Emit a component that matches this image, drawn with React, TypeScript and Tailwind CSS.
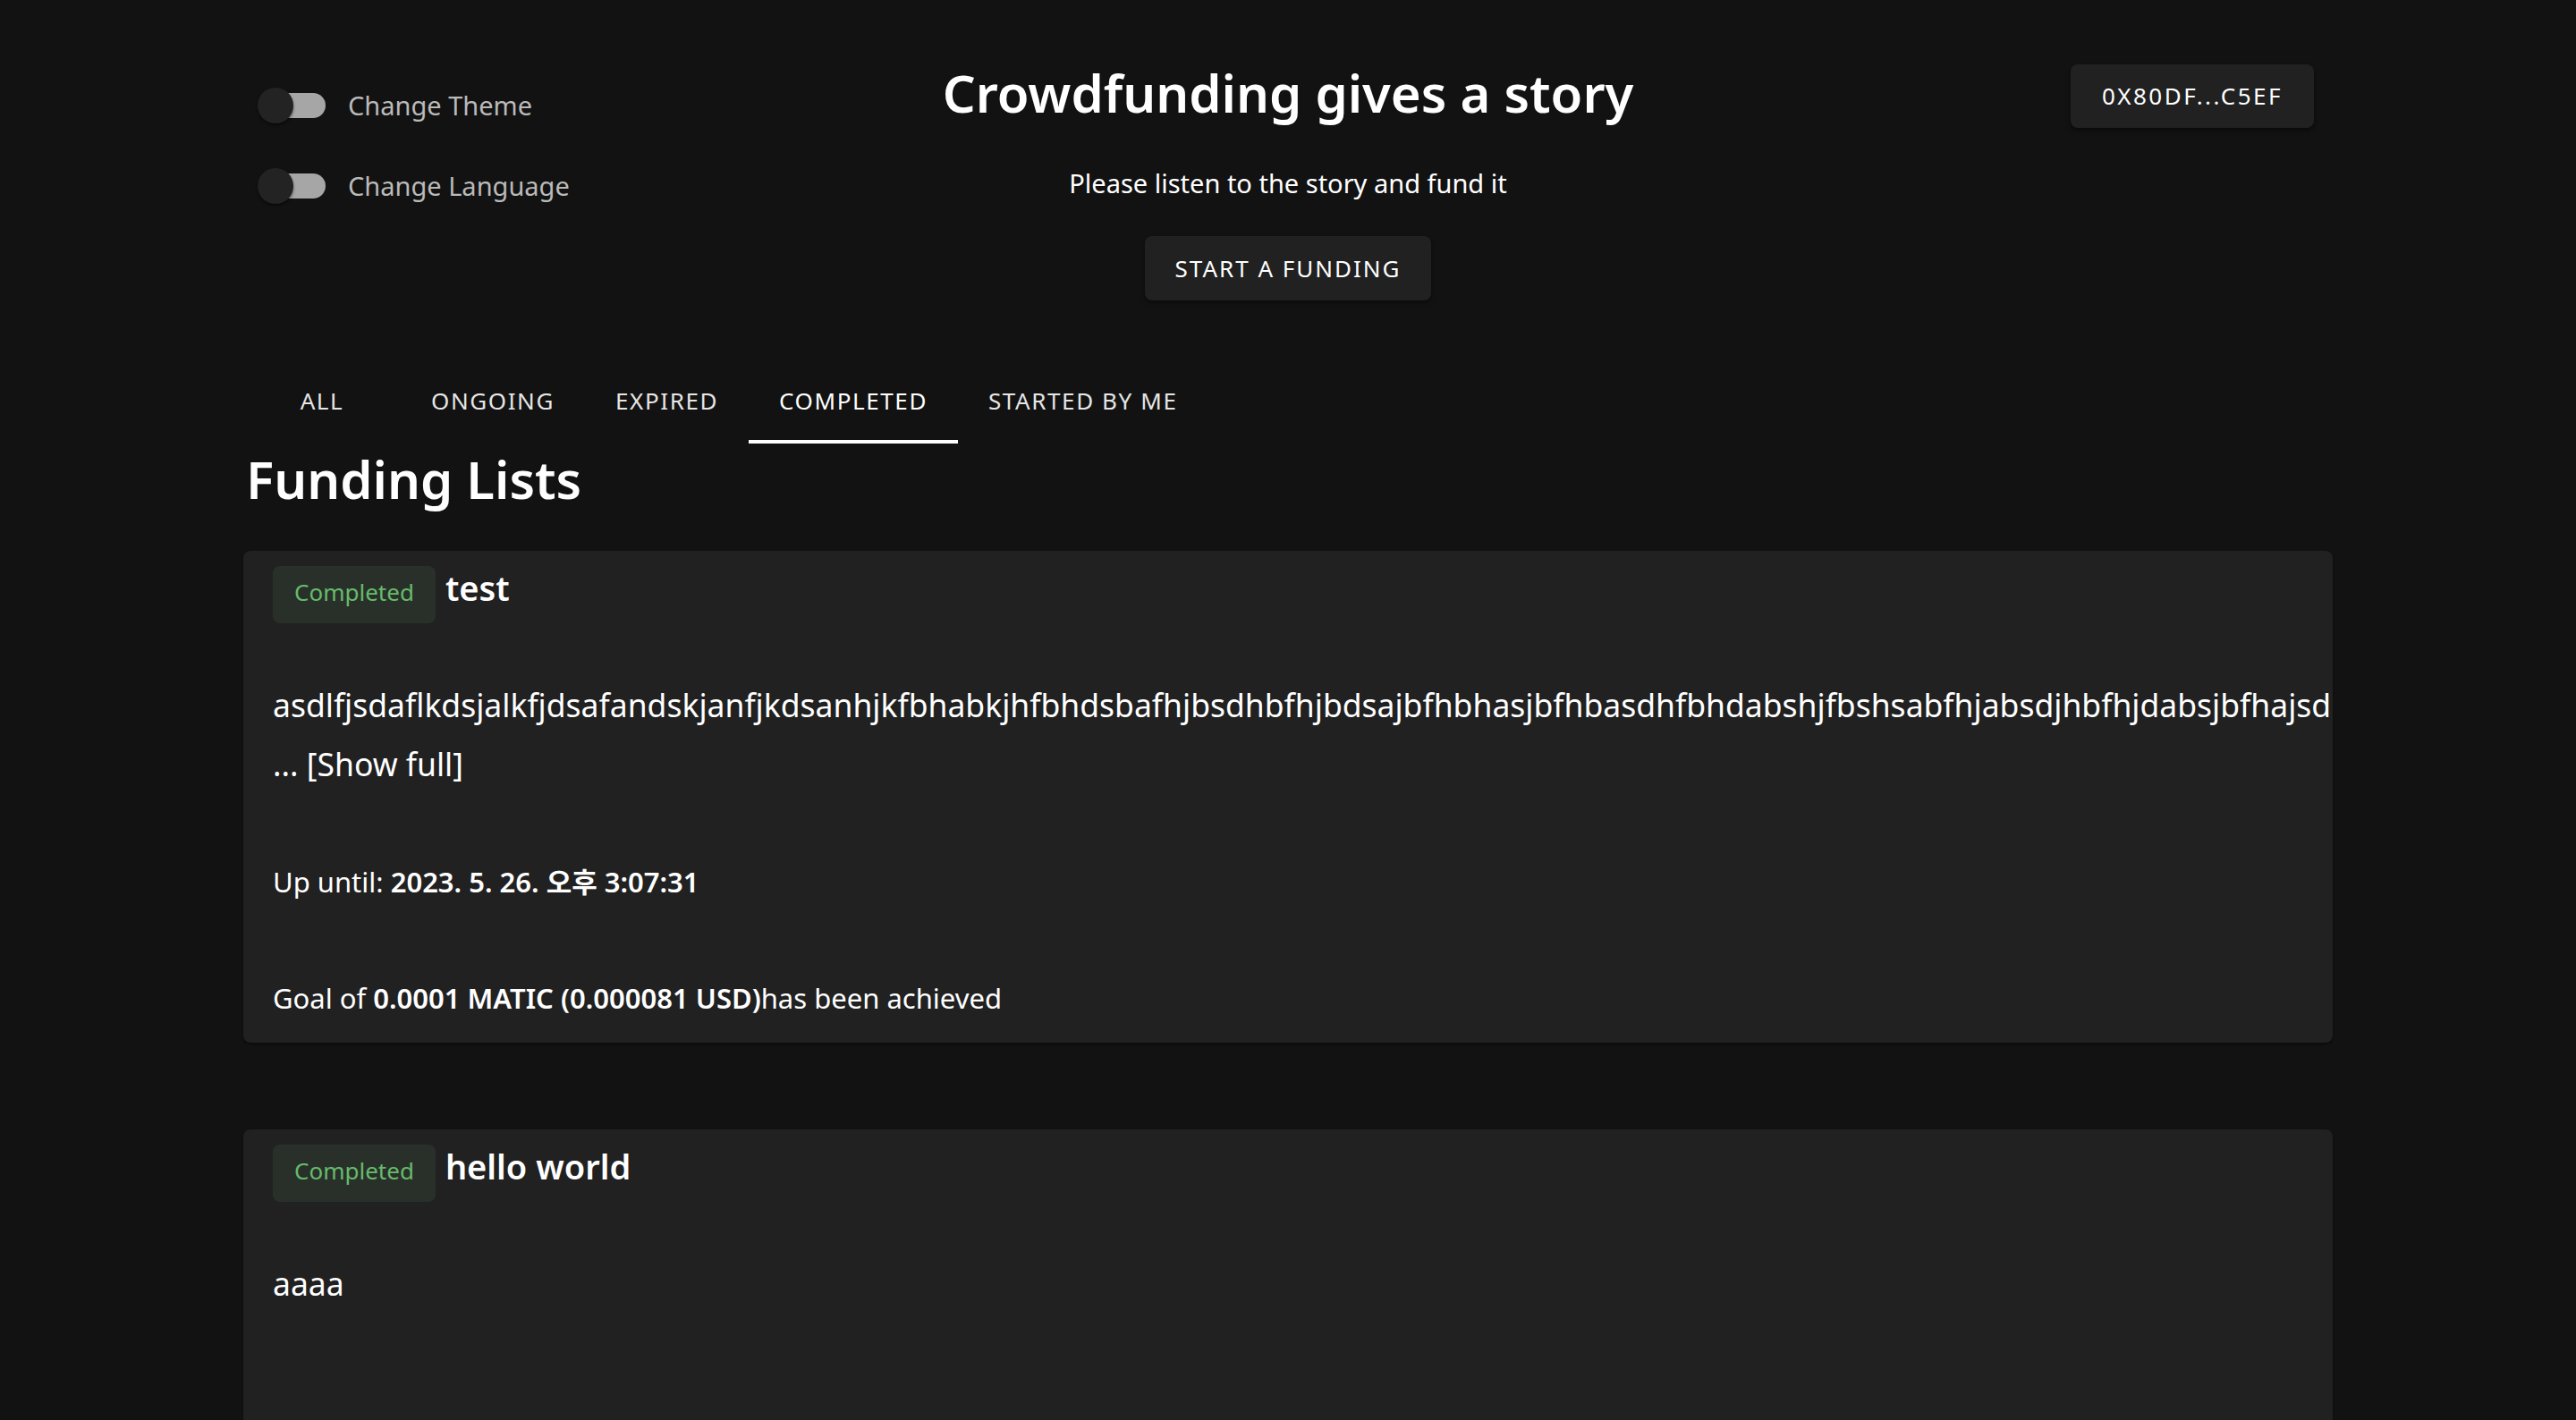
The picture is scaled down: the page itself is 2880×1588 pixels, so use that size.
import { useState } from "react";

const font = "font-['Noto_Sans','Noto_Sans_CJK_KR',sans-serif]";

const tabs = ["ALL", "ONGOING", "EXPIRED", "COMPLETED", "STARTED BY ME"];

const longText =
  "asdlfjsdaflkdsjalkfjdsafandskjanfjkdsanhjkfbhabkjhfbhdsbafhjbsdhbfhjbdsajbfhbhasjbfhbasdhfbhdabshjfbshsabfhjabsdjhbfhjdabsjbfhajsdlkfjhsadkjfhsdkjfhaskjdfh";

type Funding = {
  title: string;
  desc: string;
  truncated: boolean;
  until?: string;
  goal?: string;
};

const fundings: Funding[] = [
  {
    title: "test",
    desc: longText,
    truncated: true,
    until: "2023. 5. 26. 오후 3:07:31",
    goal: "0.0001 MATIC (0.000081 USD)",
  },
  {
    title: "hello world",
    desc: "aaaa",
    truncated: false,
  },
];

const Toggle = ({ label }: { label: string }) => (
  <div className="flex h-[76px] items-center">
    <div className="relative ml-[24px] h-[28px] w-[68px] rounded-full bg-[#a6a6a6]">
      <div className="absolute left-[-8px] top-[-6px] h-[40px] w-[40px] rounded-full bg-[#232323] shadow-[0_2px_3px_rgba(0,0,0,0.5)]" />
    </div>
    <span className="ml-[25px] text-[29px] leading-[40px] text-[#bababa]">{label}</span>
  </div>
);

const FundingCard = ({ item }: { item: Funding }) => (
  <div className="min-h-[400px] overflow-hidden rounded-[8px] bg-[#212121] px-[33px] pb-[30px] pt-[17px] shadow-[0_2px_3px_rgba(0,0,0,0.4)]">
    <div className="flex items-baseline gap-[11px]">
      <span className="rounded-[8px] bg-[#29302a] px-[24px] pb-[17px] pt-[11px] text-[26px] leading-[36px] text-[#66bb6a]">
        Completed
      </span>
      <span className="text-[38px] font-semibold leading-[46px]">{item.title}</span>
    </div>
    <p className="mt-[58px] text-[35.5px] leading-[66px]">
      {item.desc}
      {item.truncated && " ... [Show full]"}
    </p>
    {item.until && (
      <p className="mt-[79px] text-[31px] leading-[40px]">
        Up until: <span className="font-semibold">{item.until}</span>
      </p>
    )}
    {item.goal && (
      <p className="mt-[90px] text-[31px] leading-[40px]">
        Goal of <span className="font-semibold">{item.goal}</span>has been achieved
      </p>
    )}
  </div>
);

export default function App() {
  const [tab] = useState(3);

  return (
    <div className={`h-screen overflow-hidden bg-[#121212] text-white ${font}`}>
      <div className="mx-auto w-[2336px]">
        <header className="grid grid-cols-[1fr_auto_1fr] items-start pt-[66px]">
          <div className="mt-[14px] flex flex-col gap-[14px]">
            <Toggle label="Change Theme" />
            <Toggle label="Change Language" />
          </div>
          <div className="flex flex-col items-center">
            <h1 className="text-[58px] font-semibold leading-[76px]">Crowdfunding gives a story</h1>
            <p className="mt-[41px] text-[29px] leading-[44px]">Please listen to the story and fund it</p>
            <button className="mt-[37px] flex h-[72px] items-center rounded-[8px] bg-[#212121] px-[33px] text-[26px] tracking-[2px] shadow-[0_3px_5px_rgba(0,0,0,0.4)]">
              START A FUNDING
            </button>
          </div>
          <div className="flex justify-end">
            <button className="mr-[21px] mt-[6px] flex h-[71px] items-center rounded-[8px] bg-[#212121] px-[35px] text-[26px] tracking-[2.5px] shadow-[0_3px_5px_rgba(0,0,0,0.45)]">
              0X80DF...C5EF
            </button>
          </div>
        </header>

        <nav className="mt-[64px] flex">
          {tabs.map((t, i) => (
            <div
              key={t}
              className={`relative flex h-[96px] min-w-[176px] items-center justify-center px-[34px] text-[26px] tracking-[1.6px] ${
                i === tab ? "text-white" : "text-[#e6e6e6]"
              }`}
            >
              {t}
              {i === tab && <div className="absolute bottom-0 left-0 right-0 h-[4px] bg-white" />}
            </div>
          ))}
        </nav>

        <h2 className="mt-[2px] pl-[3px] text-[58px] font-semibold leading-[76px]">Funding Lists</h2>

        <div className="mt-[42px] flex flex-col gap-[97px]">
          {fundings.map((f) => (
            <FundingCard key={f.title} item={f} />
          ))}
        </div>
      </div>
    </div>
  );
}
